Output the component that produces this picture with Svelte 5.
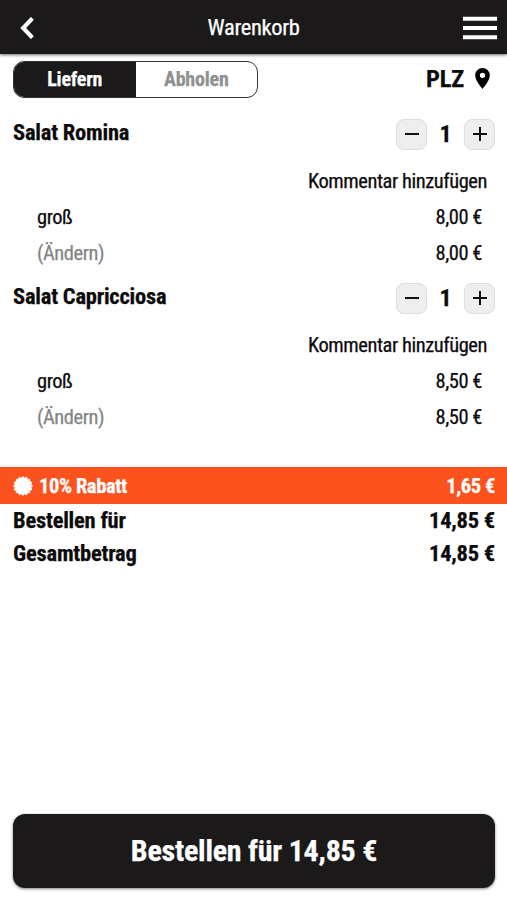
<script>
    let delivery = true

    let items = [
        {name: 'Salat Romina', size: 'groß', price: 8, count: 1},
        {name: 'Salat Capricciosa', size: 'groß', price: 8.5, count: 1}
    ]

    const euro = (value) => value.toFixed(2).replace('.', ',') + ' €'

    $: sum = items.reduce((acc, item) => acc + item.price * item.count, 0)
    $: discount = sum * 0.1
    $: total = sum - discount

    function change(i, step) {
        items[i].count = Math.max(0, items[i].count + step)
    }

    // outline of the discount badge, 16 blunt spikes
    const badge = Array.from({length: 32}, (_, i) => {
        const r = i % 2 ? 8 : 9.6
        const a = (i * Math.PI) / 16
        return `${(10 + r * Math.sin(a)).toFixed(2)},${(10 - r * Math.cos(a)).toFixed(2)}`
    }).join(' ')
</script>

<main>
    <header>
        <button class="icon" aria-label="Zurück">
            <svg width="14" height="22" viewBox="0 0 14 22"><path d="M12.4 1.4 L3.2 11 L12.4 20.6" fill="none" stroke="#fff" stroke-width="4.2" /></svg>
        </button>
        <h1>Warenkorb</h1>
        <button class="icon" aria-label="Menü">
            <svg width="34" height="24" viewBox="0 0 34 24"><path d="M0 2.8H34M0 12H34M0 21.3H34" stroke="#fff" stroke-width="4" /></svg>
        </button>
    </header>

    <div class="mode">
        <div class="toggle">
            <button class:active={delivery} on:click={() => delivery = true}>Liefern</button>
            <button class:active={!delivery} on:click={() => delivery = false}>Abholen</button>
        </div>
        <div class="plz">
            <span>PLZ</span>
            <svg width="15" height="21" viewBox="0 0 14 20"><path d="M7 0C3.13 0 0 3.13 0 7c0 5.25 7 13 7 13s7-7.75 7-13c0-3.87-3.13-7-7-7zm0 9.5a2.5 2.5 0 1 1 0-5 2.5 2.5 0 0 1 0 5z" /></svg>
        </div>
    </div>

    <section class="items">
        {#each items as item, i (item.name)}
            <article>
                <div class="head">
                    <h2>{item.name}</h2>
                    <div class="count">
                        <button aria-label="weniger" on:click={() => change(i, -1)}>
                            <svg width="14" height="14" viewBox="0 0 14 14"><path d="M0 7H14" stroke="#111" stroke-width="2" /></svg>
                        </button>
                        <span>{item.count}</span>
                        <button aria-label="mehr" on:click={() => change(i, 1)}>
                            <svg width="14" height="14" viewBox="0 0 14 14"><path d="M0 7H14M7 0V14" stroke="#111" stroke-width="2" /></svg>
                        </button>
                    </div>
                </div>
                <div class="comment">Kommentar hinzufügen</div>
                <div class="row"><span>{item.size}</span><span>{euro(item.price)}</span></div>
                <div class="row"><span class="edit">(Ändern)</span><span>{euro(item.price * item.count)}</span></div>
            </article>
        {/each}
    </section>

    <div class="discount">
        <svg width="20" height="20" viewBox="0 0 20 20"><polygon points={badge} fill="#fff" stroke="#fff" stroke-width="0.8" stroke-linejoin="round" /></svg>
        <span>10% Rabatt</span>
        <span class="amount">{euro(discount)}</span>
    </div>
    <div class="total"><span>Bestellen für</span><span>{euro(total)}</span></div>
    <div class="total"><span>Gesamtbetrag</span><span>{euro(total)}</span></div>

    <button class="order">Bestellen für {euro(total)}</button>
</main>

<style>
    :global(body) {
        background: #fff;
    }

    main {
        display: flex;
        flex-direction: column;
        box-sizing: border-box;
        height: 900px;
        padding-bottom: 12px;
        font-family: 'Roboto Condensed', Roboto, sans-serif;
        font-stretch: 75%;
        letter-spacing: -0.22px;
        -webkit-text-stroke: 0.25px;
        color: #0c0a0b;
    }

    button {
        padding: 0;
        border: 0;
        background: none;
        font: inherit;
        letter-spacing: inherit;
        color: inherit;
    }

    svg {
        display: block;
    }

    header {
        display: flex;
        align-items: center;
        justify-content: space-between;
        height: 54px;
        padding: 2px 10px 0;
        box-sizing: border-box;
        background: #1b191a;
        box-shadow: 0 1px 3px rgba(0, 0, 0, 0.6);
        color: #fff;
    }

    .icon {
        display: flex;
        justify-content: center;
        width: 34px;
    }

    h1 {
        margin: 0 0 2px;
        font-size: 22.5px;
        font-weight: 450;
        letter-spacing: -0.35px;
    }

    .mode {
        display: flex;
        justify-content: space-between;
        align-items: center;
        padding: 7px 17px 0 13px;
    }

    .toggle {
        display: flex;
        box-sizing: border-box;
        width: 245px;
        height: 37px;
        border: 1px solid #333;
        border-radius: 11px;
        overflow: hidden;
    }

    .toggle button {
        flex: 1;
        padding-bottom: 1px;
        font-size: 20px;
        font-weight: 700;
        color: #909090;
    }

    .toggle .active {
        background: #1b191a;
        color: #fff;
    }

    .plz {
        display: flex;
        align-items: center;
        gap: 11px;
        margin-top: -2px;
        font-size: 24.5px;
        font-weight: 700;
    }

    .items {
        padding: 18px 12px 0 13px;
        height: 351px;
    }

    article {
        height: 164px;
    }

    .head {
        display: flex;
        justify-content: space-between;
        align-items: center;
        height: 36px;
        margin-bottom: 11px;
    }

    h2 {
        margin: 0 0 4px;
        font-size: 22.5px;
        font-weight: 700;
    }

    .count {
        display: flex;
        align-items: center;
        font-size: 24px;
        font-weight: 700;
    }

    .count span {
        width: 37px;
        text-align: center;
    }

    .count button {
        display: grid;
        place-items: center;
        box-sizing: border-box;
        width: 31px;
        height: 31px;
        border: 1px solid #ddd;
        border-radius: 8px;
        background: #eee;
    }

    .comment,
    .row {
        line-height: 36px;
        font-size: 20.5px;
        font-weight: 450;
        letter-spacing: -0.45px;
    }

    .comment {
        padding-right: 8px;
        text-align: right;
    }

    .row {
        display: flex;
        justify-content: space-between;
        padding: 0 13px 0 24px;
    }

    .edit {
        font-weight: 400;
        color: #858585;
    }

    .discount {
        display: flex;
        align-items: center;
        gap: 6px;
        height: 37px;
        padding: 0 12px 0 13px;
        background: #fc521e;
        font-size: 20.5px;
        font-weight: 700;
        letter-spacing: -0.4px;
        color: #fff;
    }

    .amount {
        margin-left: auto;
    }

    .total {
        display: flex;
        justify-content: space-between;
        padding: 0 12px 0 13px;
        line-height: 33px;
        font-size: 22.5px;
        font-weight: 700;
    }

    .order {
        height: 74px;
        margin: auto 12px 0 13px;
        padding-bottom: 2px;
        border-radius: 12px;
        background: #1b191a;
        box-shadow: 0 1px 3px rgba(0, 0, 0, 0.5);
        font-size: 30px;
        font-weight: 700;
        color: #fff;
    }
</style>
